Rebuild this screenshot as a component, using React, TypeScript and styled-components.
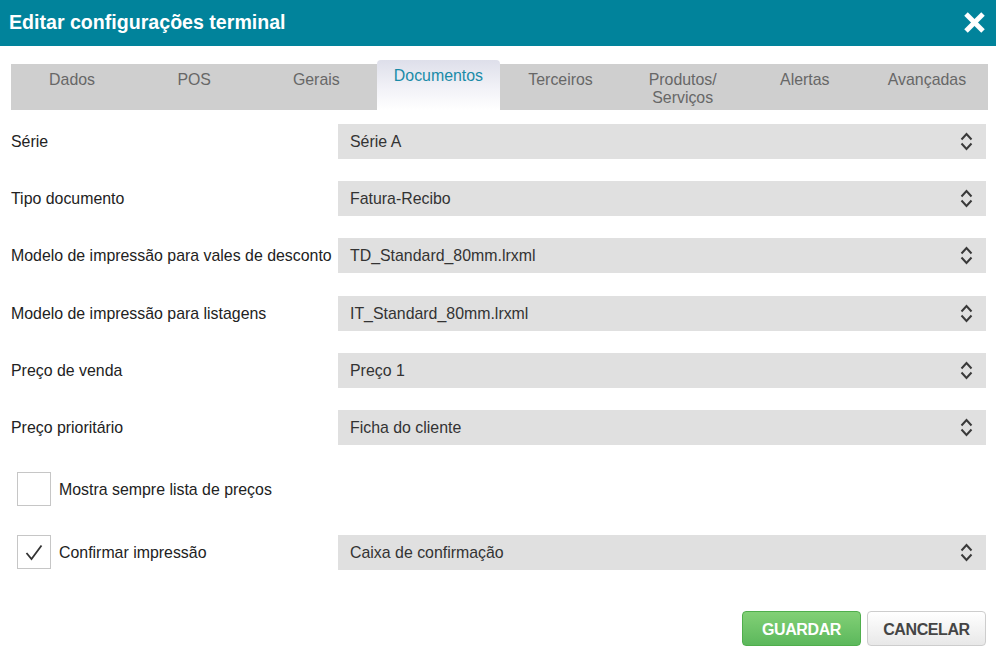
import styled, { createGlobalStyle } from 'styled-components';

const GlobalStyle = createGlobalStyle`
  body {
    margin: 0;
    background: #ffffff;
    font-family: 'Liberation Sans', Arial, sans-serif;
  }
`;

const tabs = [
  'Dados',
  'POS',
  'Gerais',
  'Documentos',
  'Terceiros',
  'Produtos/ Serviços',
  'Alertas',
  'Avançadas',
];

const selectRows = [
  { label: 'Série', value: 'Série A' },
  { label: 'Tipo documento', value: 'Fatura-Recibo' },
  { label: 'Modelo de impressão para vales de desconto', value: 'TD_Standard_80mm.lrxml' },
  { label: 'Modelo de impressão para listagens', value: 'IT_Standard_80mm.lrxml' },
  { label: 'Preço de venda', value: 'Preço 1' },
  { label: 'Preço prioritário', value: 'Ficha do cliente' },
];

function UpDownIcon() {
  return (
    <svg width="13" height="19" viewBox="0 0 13 19" fill="none">
      <polyline points="1.5,7.5 6.5,2 11.5,7.5" stroke="#3a3a3a" strokeWidth="2" />
      <polyline points="1.5,11.5 6.5,17 11.5,11.5" stroke="#3a3a3a" strokeWidth="2" />
    </svg>
  );
}

function CloseIcon() {
  return (
    <svg width="23" height="23" viewBox="0 0 23 23">
      <line x1="3" y1="3" x2="20" y2="20" stroke="#fff" strokeWidth="5" />
      <line x1="20" y1="3" x2="3" y2="20" stroke="#fff" strokeWidth="5" />
    </svg>
  );
}

function Select({ value }: { value: string }) {
  return (
    <SelectBox>
      <span>{value}</span>
      <UpDownIcon />
    </SelectBox>
  );
}

export default function App() {
  return (
    <>
      <GlobalStyle />
      <Dialog>
        <Header>
          <Title>Editar configurações terminal</Title>
          <CloseButton>
            <CloseIcon />
          </CloseButton>
        </Header>
        <Body>
          <TabBar>
            {tabs.map((t) => (
              <Tab key={t} $active={t === 'Documentos'}>
                {t}
              </Tab>
            ))}
          </TabBar>
          <Form>
            {selectRows.map((r) => (
              <Row key={r.label}>
                <Label>{r.label}</Label>
                <Select value={r.value} />
              </Row>
            ))}
            <CheckRow $top={27}>
              <CheckField>
                <CheckBox />
                <CheckLabel>Mostra sempre lista de preços</CheckLabel>
              </CheckField>
            </CheckRow>
            <CheckRow $top={28}>
              <CheckField>
                <CheckBox>
                  <svg width="18" height="17" viewBox="0 0 18 17" fill="none">
                    <polyline points="1.5,9 6.5,15 16.5,1.5" stroke="#333" strokeWidth="1.8" />
                  </svg>
                </CheckBox>
                <CheckLabel>Confirmar impressão</CheckLabel>
              </CheckField>
              <Select value="Caixa de confirmação" />
            </CheckRow>
          </Form>
          <Footer>
            <SaveButton>GUARDAR</SaveButton>
            <CancelButton>CANCELAR</CancelButton>
          </Footer>
        </Body>
      </Dialog>
    </>
  );
}

const Dialog = styled.div`
  width: 996px;
  height: 657px;
  background: #fff;
  overflow: hidden;
`;

const Header = styled.div`
  height: 46px;
  background: #01839b;
  display: flex;
  align-items: center;
  justify-content: space-between;
  padding: 0 10px 0 9px;
`;

const Title = styled.div`
  color: #fff;
  font-size: 19.6px;
  font-weight: 700;
  margin-top: -2px;
`;

const CloseButton = styled.div`
  display: flex;
  align-items: center;
  margin-top: -1px;
`;

const Body = styled.div`
  padding: 0 9px 0 11px;
`;

const TabBar = styled.div`
  margin-top: 18px;
  height: 46px;
  background: #cfcfcf;
  display: grid;
  grid-template-columns: repeat(8, 1fr);
  margin-right: -1px;
`;

const Tab = styled.div<{ $active?: boolean }>`
  font-size: 15.9px;
  line-height: 18px;
  text-align: center;
  padding: 7px 6px 0;
  color: ${(p) => (p.$active ? '#1a8ba8' : '#676767')};
  ${(p) =>
    p.$active &&
    `
    margin-top: -4px;
    height: 50px;
    box-sizing: border-box;
    border-radius: 4px 4px 0 0;
    background: linear-gradient(to bottom, #dedfea 0%, #f3f3f8 60%, #ffffff 100%);
  `}
`;

const Form = styled.div`
  margin-top: 14px;
  display: flex;
  flex-direction: column;
`;

const Row = styled.div`
  display: grid;
  grid-template-columns: 327px 1fr;
  align-items: center;
  height: 35px;
  margin-bottom: 22.2px;
  &:nth-child(6) {
    margin-bottom: 0;
  }
`;

const Label = styled.div`
  font-size: 15.9px;
  color: #222;
  white-space: nowrap;
  padding-top: 1px;
`;

const SelectBox = styled.div`
  height: 35px;
  background: #e0e0e0;
  display: flex;
  align-items: center;
  justify-content: space-between;
  padding: 0 13px 0 12px;
  font-size: 15.9px;
  color: #333;
  margin-right: 1px;
  span {
    padding-top: 1px;
  }
`;

const CheckRow = styled.div<{ $top: number }>`
  display: grid;
  grid-template-columns: 327px 1fr;
  align-items: center;
  height: 35px;
  margin-top: ${(p) => p.$top}px;
`;

const CheckField = styled.div`
  display: flex;
  align-items: center;
  gap: 8px;
  padding-left: 6px;
`;

const CheckBox = styled.div`
  width: 34px;
  height: 34px;
  box-sizing: border-box;
  border: 1px solid #c6c6c6;
  background: #fff;
  display: flex;
  align-items: center;
  justify-content: center;
  padding-top: 1px;
`;

const CheckLabel = styled.div`
  font-size: 15.9px;
  color: #222;
  padding-top: 1px;
`;

const Footer = styled.div`
  display: flex;
  justify-content: flex-end;
  gap: 6px;
  margin-top: 41px;
`;

const ButtonBase = styled.div`
  width: 119px;
  height: 35px;
  box-sizing: border-box;
  border-radius: 4px;
  display: flex;
  align-items: center;
  justify-content: center;
  padding-top: 3px;
  font-size: 16px;
  font-weight: 700;
  letter-spacing: -0.4px;
`;

const SaveButton = styled(ButtonBase)`
  color: #fff;
  border: 1px solid #4fae4c;
  background: linear-gradient(to bottom, #82d076 0%, #5cb85c 100%);
`;

const CancelButton = styled(ButtonBase)`
  color: #454545;
  border: 1px solid #cdcdcd;
  background: linear-gradient(to bottom, #ffffff 0%, #e8e8e8 100%);
  margin-right: 1px;
`;
